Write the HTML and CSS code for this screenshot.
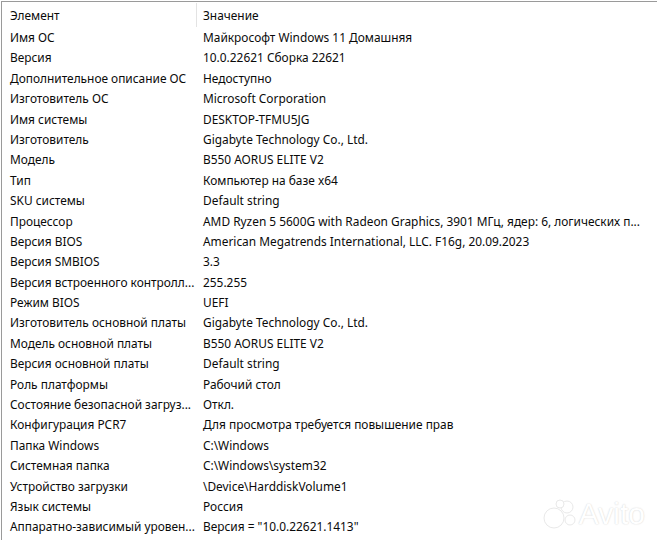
FILE: index.html
```html
<!DOCTYPE html>
<html lang="ru">
<head>
    <meta charset="UTF-8">
    <title>Сведения о системе</title>
    <link rel="stylesheet" href="styles.css">
</head>
<body>
    <div class="list-view">
        <div class="list-header">
            <div class="col-name">Элемент</div>
            <div class="col-value">Значение</div>
        </div>
        <div class="list-body">
            <div class="row"><span>Имя ОС</span><span>Майкрософт Windows 11 Домашняя</span></div>
            <div class="row"><span>Версия</span><span>10.0.22621 Сборка 22621</span></div>
            <div class="row"><span>Дополнительное описание ОС</span><span>Недоступно</span></div>
            <div class="row"><span>Изготовитель ОС</span><span>Microsoft Corporation</span></div>
            <div class="row"><span>Имя системы</span><span>DESKTOP-TFMU5JG</span></div>
            <div class="row"><span>Изготовитель</span><span>Gigabyte Technology Co., Ltd.</span></div>
            <div class="row"><span>Модель</span><span>B550 AORUS ELITE V2</span></div>
            <div class="row"><span>Тип</span><span>Компьютер на базе x64</span></div>
            <div class="row"><span>SKU системы</span><span>Default string</span></div>
            <div class="row"><span>Процессор</span><span>AMD Ryzen 5 5600G with Radeon Graphics, 3901 МГц, ядер: 6, логических п...</span></div>
            <div class="row"><span>Версия BIOS</span><span>American Megatrends International, LLC. F16g, 20.09.2023</span></div>
            <div class="row"><span>Версия SMBIOS</span><span>3.3</span></div>
            <div class="row"><span>Версия встроенного контролл...</span><span>255.255</span></div>
            <div class="row"><span>Режим BIOS</span><span>UEFI</span></div>
            <div class="row"><span>Изготовитель основной платы</span><span>Gigabyte Technology Co., Ltd.</span></div>
            <div class="row"><span>Модель основной платы</span><span>B550 AORUS ELITE V2</span></div>
            <div class="row"><span>Версия основной платы</span><span>Default string</span></div>
            <div class="row"><span>Роль платформы</span><span>Рабочий стол</span></div>
            <div class="row"><span>Состояние безопасной загруз...</span><span>Откл.</span></div>
            <div class="row"><span>Конфигурация PCR7</span><span>Для просмотра требуется повышение прав</span></div>
            <div class="row"><span>Папка Windows</span><span>C:\Windows</span></div>
            <div class="row"><span>Системная папка</span><span>C:\Windows\system32</span></div>
            <div class="row"><span>Устройство загрузки</span><span>\Device\HarddiskVolume1</span></div>
            <div class="row"><span>Язык системы</span><span>Россия</span></div>
            <div class="row"><span>Аппаратно-зависимый уровен...</span><span>Версия = "10.0.22621.1413"</span></div>
        </div>
    </div>

    <!-- watermark -->
    <div class="watermark">
        <svg width="34" height="30" viewBox="0 0 34 30">
            <circle cx="12" cy="19" r="10"/>
            <circle cx="25" cy="8" r="6"/>
            <circle cx="28" cy="21" r="5"/>
            <circle cx="18" cy="5" r="4"/>
        </svg>
        <span>Avito</span>
    </div>
</body>
</html>
```

FILE: styles.css
```css
body {
    margin: 0;
    background-color: #fff;
    font-family: "Noto Sans", "Open Sans", sans-serif;
    font-size: 11.9px;
    color: #0a0a0a;
    overflow: hidden;
}

.list-view {
    border-top: 1px solid #9a9a9a;
    border-left: 1px solid #9a9a9a;
    margin-top: 1px;
    margin-left: 1px;
    height: 540px;
}

.list-header {
    display: grid;
    grid-template-columns: 194px 1fr;
    height: 25px;
    align-items: center;
}

.list-header .col-name {
    padding-left: 8px;
}

.list-header .col-value {
    padding-left: 6px;
    border-left: 1px solid #e3e3e3;
    height: 24px;
    line-height: 24px;
}

.row {
    display: grid;
    grid-template-columns: 194px 1fr;
    height: 20.4px;
    line-height: 20.4px;
    white-space: nowrap;
}

.row span {
    overflow: hidden;
    text-overflow: ellipsis;
}

.row span:first-child {
    padding-left: 8px;
}

.row span:last-child {
    padding-left: 7px;
}

.watermark {
    position: absolute;
    right: 12px;
    bottom: 9px;
    display: flex;
    align-items: center;
    gap: 3px;
    opacity: 0.8;
}

.watermark svg circle {
    fill: #fff;
    stroke: #e4e4e4;
    stroke-width: 1;
}

.watermark span {
    font-family: "Liberation Sans", sans-serif;
    font-size: 30px;
    color: #fff;
    text-shadow: 0 0 1px #d0d0d0, 0 0 2px #e2e2e2;
}
```
